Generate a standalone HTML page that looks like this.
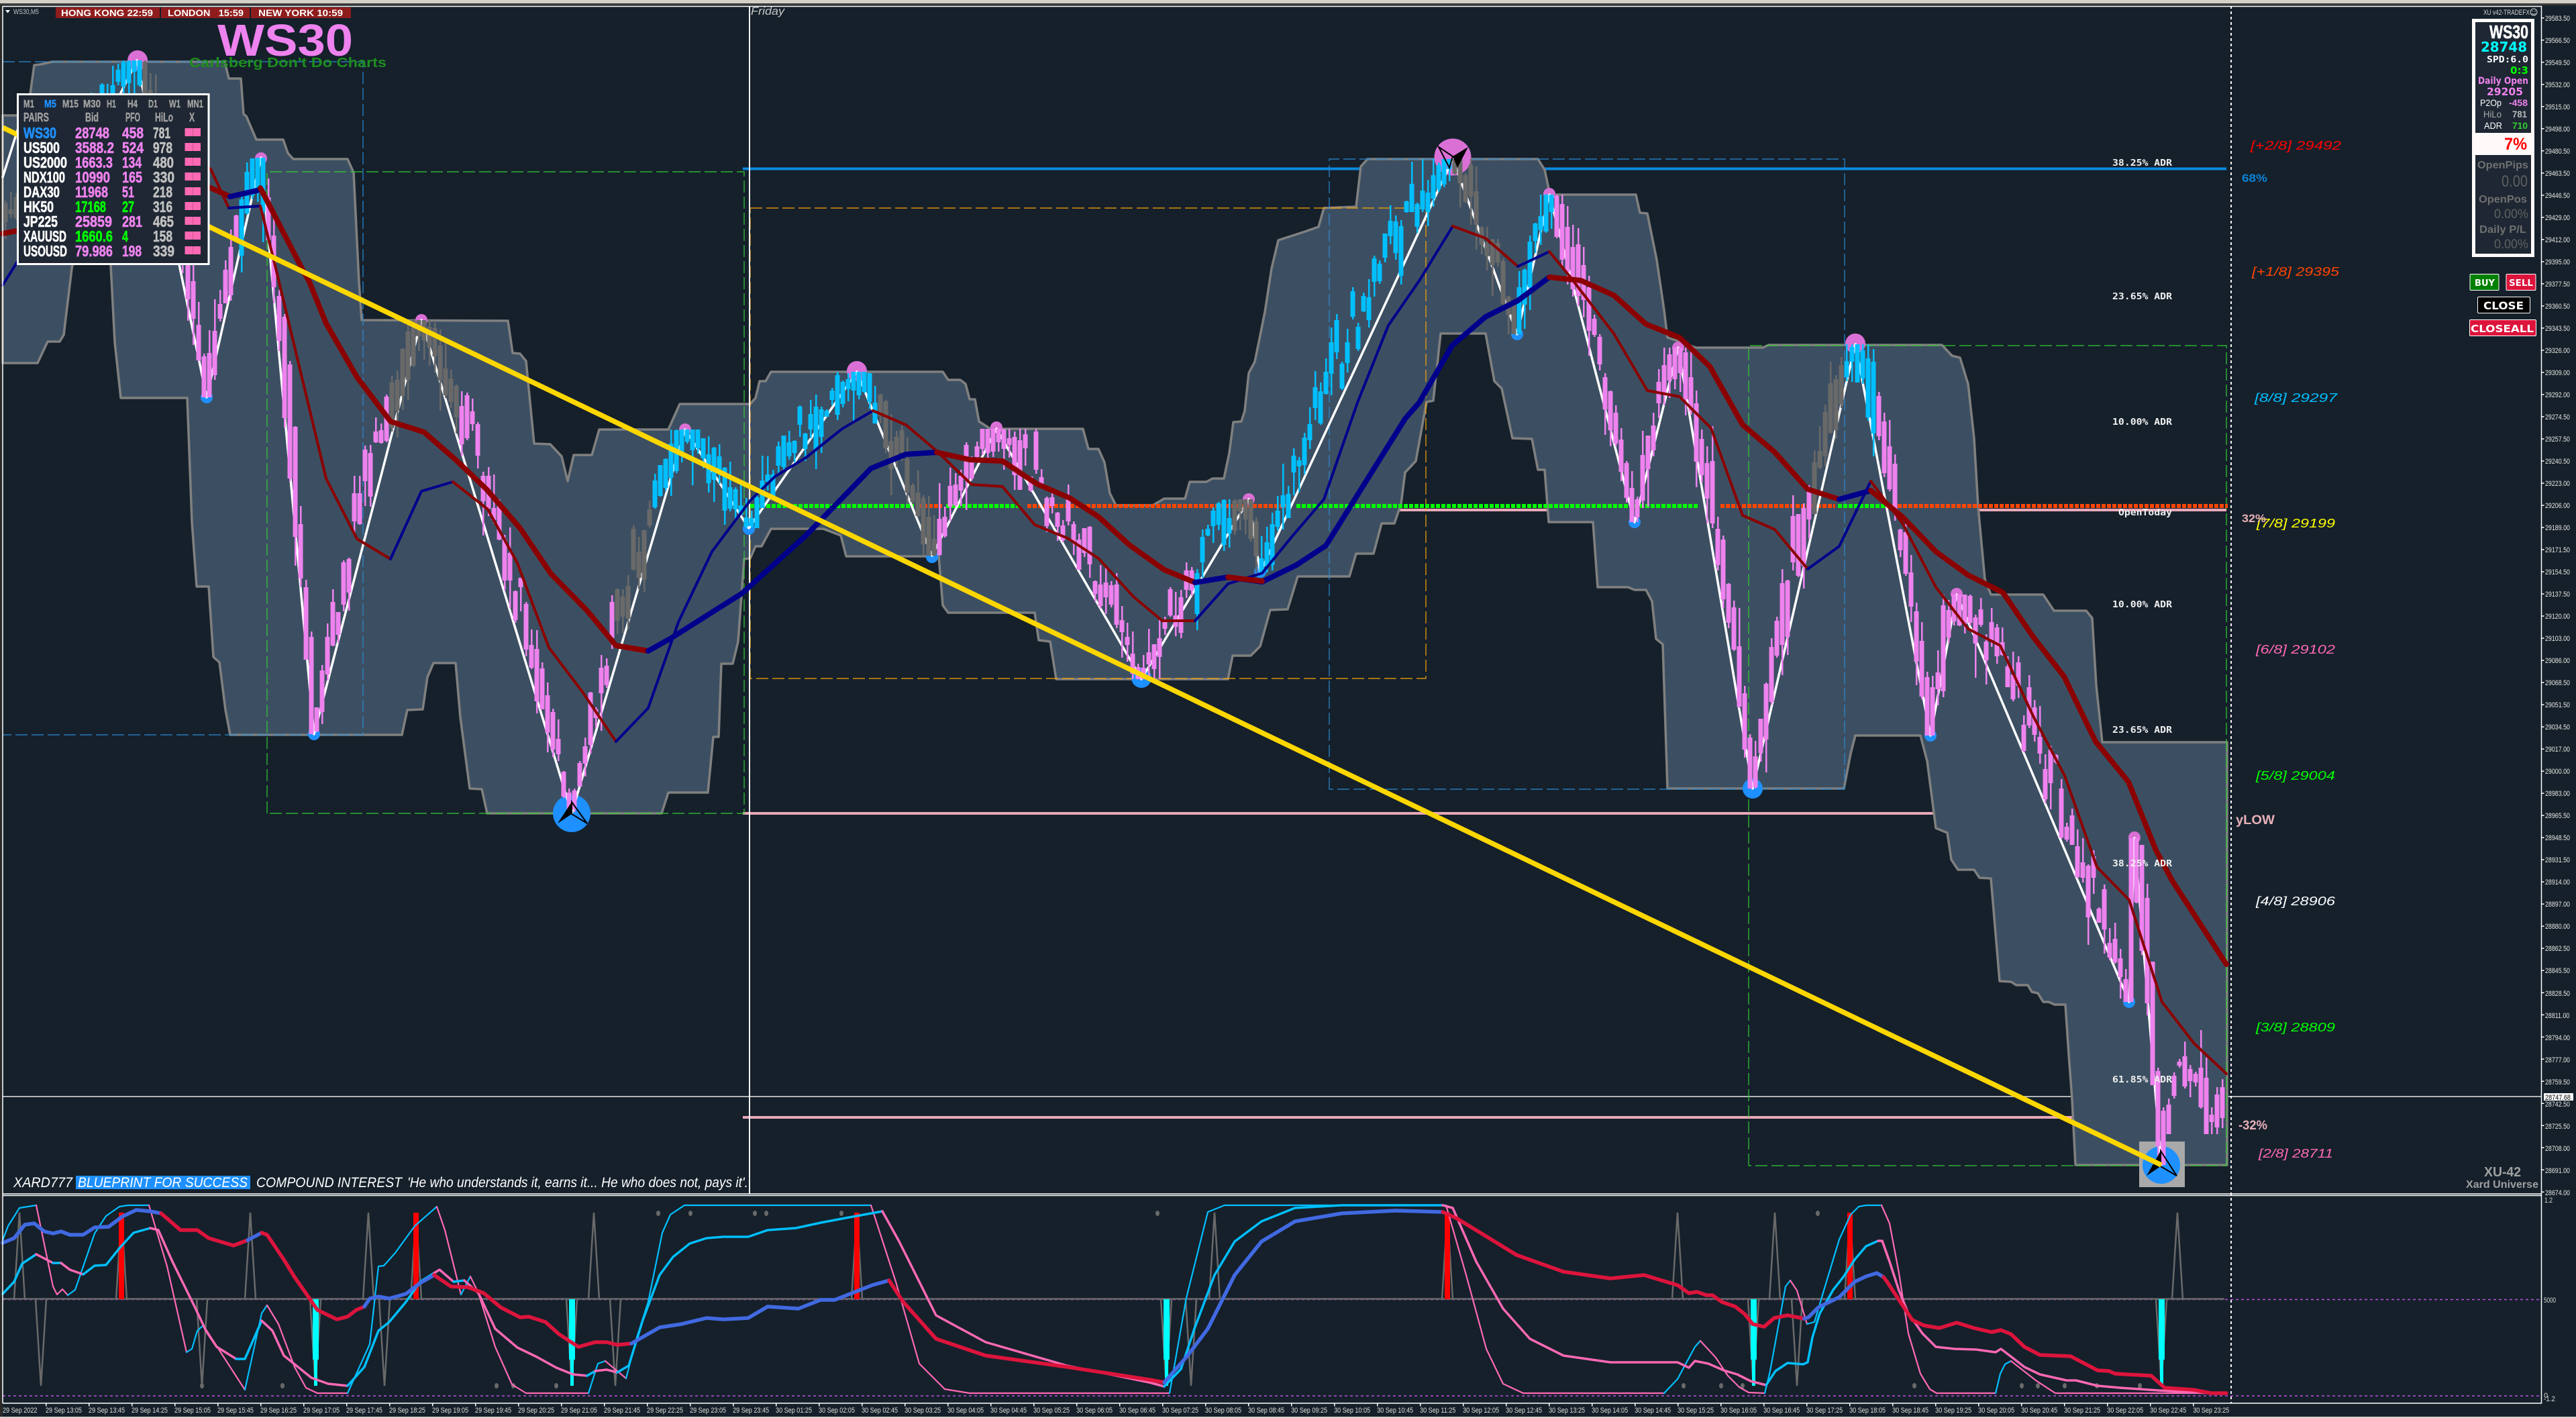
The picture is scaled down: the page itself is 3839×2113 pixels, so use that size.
<!DOCTYPE html>
<html><head><meta charset="utf-8"><title>WS30,M5</title>
<style>
html,body{margin:0;padding:0;background:#15202b;width:3839px;height:2113px;overflow:hidden}
svg{display:block;font-family:"Liberation Sans",sans-serif}
.c{stroke:#00bfff}.p{stroke:#ff69b4}.bl{stroke:#4169e1}.cr{stroke:#dc143c}.n{stroke:#00008b}.r{stroke:#8b0000}
polyline{fill:none;stroke-linejoin:round;stroke-linecap:round}
.lm{fill:#00ff00;stroke:#00ff00}
</style></head><body>
<svg xmlns="http://www.w3.org/2000/svg" width="3839" height="2113" viewBox="0 0 3839 2113">
<rect width="3839" height="2113" fill="#15202b"/>
<rect width="3839" height="5" fill="#d4d0c8"/><rect y="5" width="3839" height="3" fill="#3a3a3a"/>
<rect y="8" width="4" height="2105" fill="#2a2a2a"/>
<rect y="2111" width="3839" height="2" fill="#d4d0c8"/>

<!-- lines behind band -->
<g fill="none">
<path d="M1107 251.5H3318" stroke="#0a8ae0" stroke-width="4"/>
<path d="M1118 760H3318" stroke="#e8a7b8" stroke-width="4"/>
<path d="M1107 1212H2882M1107 1665H3095" stroke="#e8a7b8" stroke-width="4"/>
<path d="M4 1634H3787" stroke="#e6e6e6" stroke-width="1.5"/>
</g>

<!-- band -->
<polygon fill="#3c4f62" stroke="#808080" stroke-width="3.5" stroke-linejoin="round" points="4,172 25,172 35,165 45,140 51,97 60,96 78,92 335,92 341,117 359,117 363,170 367,173 382,208 422,208 429,228 437,237 518,237 527,257 535,420 539,477 757,478 764,526 775,527 784,538 796,661 820,662 837,680 846,717 855,678 882,678 893,640 996,640 1013,602 1118,602 1126,593 1132,568 1141,568 1149,554 1405,554 1413,566 1431,566 1439,572 1445,595 1453,595 1459,628 1476,639 1614,639 1622,669 1637,669 1646,689 1654,735 1663,753 1718,753 1735,743 1766,743 1773,718 1798,718 1807,713 1824,713 1832,675 1838,629 1850,628 1855,612 1861,556 1870,539 1878,500 1885,465 1895,400 1905,358 1945,345 1965,338 1973,310 2021,308 2028,248 2038,237 2292,237 2302,253 2310,290 2438,290 2444,317 2455,318 2469,387 2480,462 2485,503 2500,508 2527,518 2627,518 2636,514 2894,514 2909,530 2921,533 2933,572 2942,653 2948,755 2958,863 2967,886 3045,886 3061,910 3109,910 3118,921 3124,1021 3133,1106 3319,1106 3319,1736 3093,1736 3088,1638 3083,1571 3078,1497 3062,1497 3053,1493 3045,1493 3037,1480 3028,1478 3022,1468 3005,1468 2997,1463 2980,1462 2967,1309 2950,1308 2942,1296 2918,1296 2908,1281 2902,1241 2885,1234 2872,1134 2862,1096 2765,1096 2758,1123 2748,1175 2485,1175 2478,960 2468,952 2462,896 2453,879 2436,879 2426,875 2381,875 2374,778 2308,778 2302,700 2292,700 2283,654 2254,653 2238,579 2227,568 2214,497 2147,497 2136,597 2126,599 2110,687 2094,704 2088,751 2078,780 2059,780 2047,825 2021,825 2011,859 1934,859 1919,908 1893,909 1878,963 1864,977 1837,977 1830,1012 1574,1012 1565,956 1548,954 1542,913 1413,913 1405,902 1399,829 1261,829 1253,798 1227,788 1149,788 1135,814 1126,814 1118,832 1109,833 1100,956 1092,989 1075,989 1071,1098 1063,1098 1055,1181 996,1181 986,1212 726,1212 718,1176 700,1175 686,1069 679,988 646,988 637,1009 630,1057 607,1058 599,1095 343,1095 336,1058 327,987 318,979 311,874 293,874 286,778 279,593 180,593 171,510 165,395 160,300 112,300 108,395 107,400 95,499 89,509 71,509 56,541 4,541"/>

<!-- dashed rectangles -->
<g fill="none" stroke-width="1.2" stroke-dasharray="18 6">
<path d="M4 92H541V1095H4" stroke="#2a8ad4"/>
<path d="M398 1212V256H1109V1212H398" stroke="#32cd32"/>
<path d="M1118 310H2125V1011H1118Z" stroke="#ffa500"/>
<path d="M1981 1176V237H2749V1176H1981Z" stroke="#2a8ad4"/>
<path d="M2606 1737V515H3318V1737H2606" stroke="#32cd32"/>
</g>

<!-- open today dotted -->
<g fill="none" stroke-width="6" stroke-dasharray="6 2">
<path d="M1118 754H1362M1410 754H1522M1932 754H2530M2739 754H2809" stroke="#00ff00"/>
<path d="M1368 754H1404M1531 754H1922M2564 754H2735M2812 754H3320" stroke="#ff4500"/>
</g>

<!-- vertical markers -->
<path d="M1117 9V1779" stroke="#fff" stroke-width="2"/>
<path d="M3325 9V2091" stroke="#fff" stroke-width="2" stroke-dasharray="4 4"/>

<!-- pivot circles -->
<g fill="#da70d6">
<circle cx="205" cy="90" r="15"/><circle cx="389" cy="236" r="9"/><circle cx="628" cy="477" r="9"/><circle cx="1021" cy="640" r="9"/><circle cx="1277" cy="553" r="15"/><circle cx="1485" cy="637" r="9"/><circle cx="1861" cy="744" r="9"/><circle cx="2165" cy="234" r="27.5"/><circle cx="2309" cy="289" r="9"/><circle cx="2501" cy="518" r="9"/><circle cx="2765" cy="512" r="15"/><circle cx="2916" cy="885" r="9"/><circle cx="3181" cy="1248" r="9"/>
</g>
<rect x="3188" y="1701" width="68" height="68" fill="#a9a9a9"/>
<g fill="#1e90ff">
<circle cx="308" cy="592" r="9"/><circle cx="468" cy="1094" r="9"/><circle cx="1116" cy="788" r="9"/><circle cx="1389" cy="830" r="9"/><circle cx="1701" cy="1010" r="15"/><circle cx="1878" cy="852" r="9"/><circle cx="2261" cy="498" r="9"/><circle cx="2436" cy="778" r="9"/><circle cx="2612" cy="1175" r="15"/><circle cx="2877" cy="1096" r="9"/><circle cx="3173" cy="1493" r="9"/><circle cx="852" cy="1212" r="28"/><circle cx="3221" cy="1736" r="28"/>
</g>

<!-- zigzag -->
<polyline stroke="#fff" stroke-width="3.5" stroke-linecap="butt" points="4,264 40,150 100,300 204,90 308,592 389,235 468,1094 628,477 852,1212 1021,640 1116,787 1277,554 1389,828 1485,639 1701,1012 1861,744 1878,853 2165,237 2261,498 2309,290 2436,778 2501,518 2612,1175 2765,513 2877,1096 2916,886 3173,1493 3181,1249 3221,1736"/>

<!-- candles -->
<g fill="none" shape-rendering="crispEdges">
<path id="wb" stroke="#00bfff" stroke-width="2.5"/><path id="wv" stroke="#ee82ee" stroke-width="2.5"/><path id="wg" stroke="#696969" stroke-width="2.5"/>
<path id="bb" stroke="#00bfff" stroke-width="7"/><path id="bv" stroke="#ee82ee" stroke-width="7"/><path id="bg" stroke="#696969" stroke-width="7"/>
</g>

<!-- stars -->
<path d="M852 1195L831 1227L852 1213Z" fill="#000"/><path d="M852 1195L875 1227L852 1213Z" fill="none" stroke="#000" stroke-width="2"/>
<path d="M3220 1715L3199 1752L3220 1738Z" fill="#000"/><path d="M3220 1715L3244 1752L3220 1738Z" fill="none" stroke="#000" stroke-width="2"/>
<path d="M2188 219L2165 233L2172 250Z" fill="#000"/><path d="M2144 219L2165 233L2160 250Z" fill="none" stroke="#000" stroke-width="2"/>

<!-- moving averages thin -->
<g stroke-width="4">
<polyline class="n" points="4,425 24,393 60,340"/>
<polyline class="r" points="250,200 314,252 341,310"/>
<polyline class="n" points="341,310 388,307"/>
<polyline class="r" points="388,307 411,400 486,713 532,803 582,833"/>
<polyline class="n" points="582,833 628,732 675,718"/>
<polyline class="r" points="675,718 727,759 771,839 818,965 868,1031 918,1105"/>
<polyline class="n" points="918,1105 966,1055 1011,927 1061,822 1118,746 1155,710 1201,682 1255,639 1301,612"/>
<polyline class="r" points="1301,612 1350,633 1396,672 1448,722 1494,725 1542,782 1591,802 1637,832 1689,889 1732,925 1781,925"/>
<polyline class="n" points="1781,925 1830,870 1881,854 1925,800 1973,744 2023,600 2069,485 2116,417 2165,337"/>
<polyline class="r" points="2165,337 2214,355 2262,397"/>
<polyline class="n" points="2262,397 2309,375"/>
<polyline class="r" points="2309,375 2338,410 2405,497 2455,582 2503,591 2550,638 2597,768 2645,789 2694,848"/>
<polyline class="n" points="2694,848 2741,814 2788,717"/>
<polyline class="r" points="2788,717 2836,781 2885,875 2933,937 2981,962 3030,1067 3077,1156 3125,1292 3173,1341 3222,1493 3270,1555 3318,1600"/>
</g>
<!-- moving averages thick -->
<g stroke-width="8">
<polyline class="r" points="4,348 100,330 200,240 314,280 343,293"/>
<polyline class="n" points="343,293 387,283"/>
<polyline class="r" points="388,280 450,400 461,420 486,482 532,562 582,628 632,644 679,685 725,729 775,787 821,855 875,910 918,962 966,970"/>
<polyline class="n" points="966,970 1000,951 1106,884 1201,798 1298,698 1350,677 1396,674"/>
<polyline class="r" points="1396,674 1445,685 1494,687 1545,721 1594,742 1637,770 1683,812 1735,849 1781,868"/>
<polyline class="n" points="1781,868 1830,860 1881,867 1932,842 1976,813 2094,624 2115,600 2164,515 2214,472 2262,448 2309,413"/>
<polyline class="r" points="1830,860 1881,866"/>
<polyline class="r" points="2309,413 2356,418 2405,440 2453,483 2503,503 2548,546 2597,633 2645,674 2694,729 2741,744"/>
<polyline class="n" points="2741,744 2788,731"/>
<polyline class="r" points="2788,731 2836,771 2885,822 2933,857 2985,883 3030,949 3076,1008 3123,1105 3172,1165 3213,1267 3237,1312 3318,1437"/>
</g>
<!-- yellow trend -->
<path d="M4 190L3221 1736" stroke="#ffd700" stroke-width="7.5"/>

<!-- on-chart labels -->
<g font-family="'DejaVu Sans Mono','Liberation Mono',monospace" font-weight="bold" font-size="13" fill="#f0f0f0">
<text x="3148" y="247" textLength="89" lengthAdjust="spacingAndGlyphs">38.25% ADR</text>
<text x="3148" y="446" textLength="89" lengthAdjust="spacingAndGlyphs">23.65% ADR</text>
<text x="3148" y="633" textLength="89" lengthAdjust="spacingAndGlyphs">10.00% ADR</text>
<text x="3157" y="768" textLength="80" lengthAdjust="spacingAndGlyphs">OpenToday</text>
<text x="3148" y="905" textLength="89" lengthAdjust="spacingAndGlyphs">10.00% ADR</text>
<text x="3148" y="1092" textLength="89" lengthAdjust="spacingAndGlyphs">23.65% ADR</text>
<text x="3148" y="1291" textLength="89" lengthAdjust="spacingAndGlyphs">38.25% ADR</text>
<text x="3148" y="1613" textLength="89" lengthAdjust="spacingAndGlyphs">61.85% ADR</text>
</g>
<g font-style="italic" font-size="18">
<text x="3354" y="223" fill="#ff0000" textLength="135" lengthAdjust="spacingAndGlyphs">[+2/8] 29492</text>
<text x="3356" y="411" fill="#ff4500" textLength="130" lengthAdjust="spacingAndGlyphs">[+1/8] 29395</text>
<text x="3360" y="599" fill="#00bfff" textLength="123" lengthAdjust="spacingAndGlyphs">[8/8] 29297</text>
<text x="3363" y="786" fill="#ffff00" textLength="117" lengthAdjust="spacingAndGlyphs">[7/8] 29199</text>
<text x="3362" y="974" fill="#ff69b4" textLength="118" lengthAdjust="spacingAndGlyphs">[6/8] 29102</text>
<text x="3362" y="1162" fill="#00ff00" textLength="118" lengthAdjust="spacingAndGlyphs">[5/8] 29004</text>
<text x="3362" y="1349" fill="#ffffff" textLength="118" lengthAdjust="spacingAndGlyphs">[4/8] 28906</text>
<text x="3362" y="1537" fill="#00ff00" textLength="118" lengthAdjust="spacingAndGlyphs">[3/8] 28809</text>
<text x="3366" y="1725" fill="#ff69b4" textLength="111" lengthAdjust="spacingAndGlyphs">[2/8] 28711</text>
</g>
<g font-weight="bold">
<text x="3341" y="271" font-size="17" fill="#0a84d8" textLength="38" lengthAdjust="spacingAndGlyphs">68%</text>
<text x="3341" y="778" font-size="17" fill="#e8b0b8" textLength="36" lengthAdjust="spacingAndGlyphs">32%</text>
<text x="3332" y="1228" font-size="19" fill="#e8b0b8" textLength="58" lengthAdjust="spacingAndGlyphs">yLOW</text>
<text x="3336" y="1683" font-size="19" fill="#e8b0b8" textLength="43" lengthAdjust="spacingAndGlyphs">-32%</text>
<text x="3702" y="1753" font-size="20" fill="#a0a0a0" textLength="55" lengthAdjust="spacingAndGlyphs">XU-42</text>
<text x="3675" y="1770" font-size="16" fill="#a0a0a0" textLength="108" lengthAdjust="spacingAndGlyphs">Xard Universe</text>
</g>
<text x="1119" y="22" font-size="17" font-style="italic" fill="#c8c8c8" textLength="50" lengthAdjust="spacingAndGlyphs">Friday</text>
<rect x="113" y="1752" width="260" height="20" fill="#1e90ff"/>
<g font-size="21" font-style="italic" fill="#fff">
<text x="20" y="1769" textLength="88" lengthAdjust="spacingAndGlyphs">XARD777</text>
<text x="116" y="1769" textLength="253" lengthAdjust="spacingAndGlyphs">BLUEPRINT FOR SUCCESS</text>
<text x="382" y="1769" textLength="217" lengthAdjust="spacingAndGlyphs">COMPOUND INTEREST</text>
<text x="607" y="1769" textLength="508" lengthAdjust="spacingAndGlyphs">'He who understands it, earns it... He who does not, pays it'.</text>
</g>

<!-- header -->
<path d="M8 15h7l-3.5 4.5z" fill="#fff"/>
<text x="20" y="21" font-size="11" fill="#c0c0c0" textLength="38" lengthAdjust="spacingAndGlyphs">WS30,M5</text>
<g fill="#8f1d1d"><rect x="83" y="11" width="155" height="16"/><rect x="240" y="11" width="132" height="16"/><rect x="374" y="11" width="149" height="16"/></g>
<g font-size="14" font-weight="bold" fill="#fff">
<text x="91" y="24" textLength="137" lengthAdjust="spacingAndGlyphs">HONG KONG  22:59</text>
<text x="250" y="24" xml:space="preserve" textLength="113" lengthAdjust="spacingAndGlyphs">LONDON   15:59</text>
<text x="385" y="24" textLength="126" lengthAdjust="spacingAndGlyphs">NEW YORK  10:59</text>
</g>
<text x="324" y="83" font-size="67" font-weight="bold" fill="#ee82ee" textLength="202" lengthAdjust="spacingAndGlyphs">WS30</text>
<text x="282" y="100" font-size="20" font-weight="bold" fill="#1e8e1e" textLength="294" lengthAdjust="spacingAndGlyphs">Carlsberg Don't Do Charts</text>

<!-- pairs panel -->
<rect x="26.5" y="140.5" width="284.5" height="253" fill="#1e2733" stroke="#fff" stroke-width="3"/>
<g font-weight="bold" font-size="16" fill="#a0a0a0" stroke="#a0a0a0" stroke-width=".4">
<text x="35" y="160" textLength="16" lengthAdjust="spacingAndGlyphs">M1</text>
<text x="66" y="160" fill="#1e90ff" stroke="#1e90ff" textLength="18" lengthAdjust="spacingAndGlyphs">M5</text>
<text x="93" y="160" textLength="24" lengthAdjust="spacingAndGlyphs">M15</text>
<text x="124" y="160" textLength="26" lengthAdjust="spacingAndGlyphs">M30</text>
<text x="159" y="160" textLength="14" lengthAdjust="spacingAndGlyphs">H1</text>
<text x="190" y="160" textLength="15" lengthAdjust="spacingAndGlyphs">H4</text>
<text x="221" y="160" textLength="14" lengthAdjust="spacingAndGlyphs">D1</text>
<text x="252" y="160" textLength="17" lengthAdjust="spacingAndGlyphs">W1</text>
<text x="279" y="160" textLength="24" lengthAdjust="spacingAndGlyphs">MN1</text>
<g font-size="18">
<text x="35" y="181" textLength="38" lengthAdjust="spacingAndGlyphs">PAIRS</text>
<text x="127" y="181" textLength="20" lengthAdjust="spacingAndGlyphs">Bid</text>
<text x="187" y="181" textLength="22" lengthAdjust="spacingAndGlyphs">PFO</text>
<text x="231" y="181" textLength="27" lengthAdjust="spacingAndGlyphs">HiLo</text>
<text x="282" y="181" textLength="8" lengthAdjust="spacingAndGlyphs">X</text>
</g>
</g>
<g font-weight="bold" font-size="23" fill="#fff" stroke="#fff" stroke-width=".6">
<text x="35" y="206" fill="#1e90ff" stroke="#1e90ff" textLength="49" lengthAdjust="spacingAndGlyphs">WS30</text>
<text x="35" y="228" textLength="54" lengthAdjust="spacingAndGlyphs">US500</text>
<text x="35" y="250" textLength="65" lengthAdjust="spacingAndGlyphs">US2000</text>
<text x="35" y="272" textLength="62" lengthAdjust="spacingAndGlyphs">NDX100</text>
<text x="35" y="294" textLength="54" lengthAdjust="spacingAndGlyphs">DAX30</text>
<text x="35" y="316" textLength="45" lengthAdjust="spacingAndGlyphs">HK50</text>
<text x="35" y="338" textLength="51" lengthAdjust="spacingAndGlyphs">JP225</text>
<text x="35" y="360" textLength="64" lengthAdjust="spacingAndGlyphs">XAUUSD</text>
<text x="35" y="382" textLength="65" lengthAdjust="spacingAndGlyphs">USOUSD</text>
<g fill="#ee82ee" stroke="#ee82ee">
<text x="112" y="206" textLength="51" lengthAdjust="spacingAndGlyphs">28748</text>
<text x="112" y="228" textLength="58" lengthAdjust="spacingAndGlyphs">3588.2</text>
<text x="112" y="250" textLength="56" lengthAdjust="spacingAndGlyphs">1663.3</text>
<text x="112" y="272" textLength="52" lengthAdjust="spacingAndGlyphs">10990</text>
<text x="112" y="294" textLength="49" lengthAdjust="spacingAndGlyphs">11968</text>
<text x="112" y="316" class="lm" textLength="46" lengthAdjust="spacingAndGlyphs">17168</text>
<text x="112" y="338" textLength="55" lengthAdjust="spacingAndGlyphs">25859</text>
<text x="112" y="360" class="lm" textLength="56" lengthAdjust="spacingAndGlyphs">1660.6</text>
<text x="112" y="382" textLength="56" lengthAdjust="spacingAndGlyphs">79.986</text>
<text x="182" y="206" textLength="32" lengthAdjust="spacingAndGlyphs">458</text>
<text x="182" y="228" textLength="32" lengthAdjust="spacingAndGlyphs">524</text>
<text x="182" y="250" textLength="29" lengthAdjust="spacingAndGlyphs">134</text>
<text x="182" y="272" textLength="30" lengthAdjust="spacingAndGlyphs">165</text>
<text x="182" y="294" textLength="18" lengthAdjust="spacingAndGlyphs">51</text>
<text x="182" y="316" class="lm" textLength="18" lengthAdjust="spacingAndGlyphs">27</text>
<text x="182" y="338" textLength="30" lengthAdjust="spacingAndGlyphs">281</text>
<text x="182" y="360" class="lm" textLength="9" lengthAdjust="spacingAndGlyphs">4</text>
<text x="182" y="382" textLength="29" lengthAdjust="spacingAndGlyphs">198</text>
</g>
<g fill="#c0c0c0" stroke="#c0c0c0">
<text x="228" y="206" textLength="26" lengthAdjust="spacingAndGlyphs">781</text>
<text x="228" y="228" textLength="29" lengthAdjust="spacingAndGlyphs">978</text>
<text x="228" y="250" textLength="31" lengthAdjust="spacingAndGlyphs">480</text>
<text x="228" y="272" textLength="32" lengthAdjust="spacingAndGlyphs">330</text>
<text x="228" y="294" textLength="29" lengthAdjust="spacingAndGlyphs">218</text>
<text x="228" y="316" textLength="29" lengthAdjust="spacingAndGlyphs">316</text>
<text x="228" y="338" textLength="31" lengthAdjust="spacingAndGlyphs">465</text>
<text x="228" y="360" textLength="29" lengthAdjust="spacingAndGlyphs">158</text>
<text x="228" y="382" textLength="32" lengthAdjust="spacingAndGlyphs">339</text>
</g>
</g>
<path d="M275.5 197H299M275.5 219H299M275.5 241H299M275.5 263H299M275.5 285H299M275.5 307H299M275.5 329H299M275.5 351H299M275.5 373H299" stroke="#ff69b4" stroke-width="12"/>
<path d="M287.5 191V379" stroke="#c85a90" stroke-width="1" stroke-dasharray="12 10"/>

<!-- sub window -->
<g fill="none">
<path d="M4 1936.5H3787M4 2080H3787" stroke="#c050e0" stroke-width="1.5" stroke-dasharray="4 4"/>
<path d="M4 1935.5H3315" stroke="#696969" stroke-width="2.5"/>
<path stroke="#696969" stroke-width="2.5" d="M21 1936L29 1807L37 1936M365 1936L373 1807L381 1936M541 1936L549 1807L557 1936M877 1936L885 1807L893 1936M1802 1936L1810 1807L1818 1936M2492 1936L2500 1807L2508 1936M2637 1936L2645 1807L2653 1936M3237 1936L3245 1807L3253 1936M173 1936L181 1807L189 1936M612 1936L620 1807L628 1936M1269 1936L1277 1807L1285 1936M2149 1936L2157 1807L2165 1936M2749 1936L2757 1807L2765 1936"/>
<path stroke="#696969" stroke-width="2.5" d="M53 1936L61 2065L69 1936M293 1936L301 2065L309 1936M565 1936L573 2065L581 1936M909 1936L917 2065L925 1936M1767 1936L1775 2065L1783 1936M2670 1936L2678 2065L2686 1936M462 1936L470 2065L478 1936M844 1936L852 2065L860 1936M1730 1936L1738 2065L1746 1936M2605 1936L2613 2065L2621 1936M3213 1936L3221 2065L3229 1936"/>
</g>
<g fill="#ff0000"><rect x="177" y="1807" width="8" height="129"/><rect x="616" y="1807" width="8" height="129"/><rect x="1273" y="1807" width="8" height="129"/><rect x="2153" y="1807" width="8" height="129"/><rect x="2753" y="1807" width="8" height="129"/></g>
<g fill="#00ffff">
<path d="M466 1936h9v90h-2v39h-5v-39h-2zM848 1936h9v90h-2v39h-5v-39h-2zM1734 1936h9v90h-2v39h-5v-39h-2zM2609 1936h9v90h-2v39h-5v-39h-2zM3217 1936h9v90h-2v39h-5v-39h-2z"/>
</g>
<g fill="#696969">
<ellipse cx="981" cy="1808" rx="3" ry="4"/><ellipse cx="1029" cy="1808" rx="3" ry="4"/><ellipse cx="1125" cy="1808" rx="3" ry="4"/><ellipse cx="1142" cy="1808" rx="3" ry="4"/><ellipse cx="1254" cy="1808" rx="3" ry="4"/><ellipse cx="2709" cy="1808" rx="3" ry="4"/><ellipse cx="1725" cy="1808" rx="3" ry="4"/>
<ellipse cx="301" cy="2065" rx="3" ry="4"/><ellipse cx="421" cy="2065" rx="3" ry="4"/><ellipse cx="740" cy="2065" rx="3" ry="4"/><ellipse cx="765" cy="2065" rx="3" ry="4"/><ellipse cx="829" cy="2065" rx="3" ry="4"/><ellipse cx="2509" cy="2065" rx="3" ry="4"/><ellipse cx="2565" cy="2065" rx="3" ry="4"/><ellipse cx="2597" cy="2065" rx="3" ry="4"/><ellipse cx="2853" cy="2065" rx="3" ry="4"/><ellipse cx="3013" cy="2065" rx="3" ry="4"/><ellipse cx="3037" cy="2065" rx="3" ry="4"/><ellipse cx="3077" cy="2065" rx="3" ry="4"/><ellipse cx="3125" cy="2065" rx="3" ry="4"/><ellipse cx="3189" cy="2065" rx="3" ry="4"/>
</g>
<!-- fast line -->
<g stroke-width="2.2">
<polyline class="c" points="4,1848 12,1827 29,1800 54,1796"/>
<polyline class="p" points="54,1796 79,1917 85,1929 93,1921 101,1930"/>
<polyline class="c" points="101,1930 112,1922 141,1838 158,1812 178,1798 191,1796 222,1796"/>
<polyline class="p" points="222,1796 232,1830 249,1887 278,2015"/>
<polyline class="c" points="278,2015 286,2010 294,1983 303,1975"/>
<polyline class="p" points="303,1975 365,2071"/>
<polyline class="c" points="365,2071 390,1957 398,1945"/>
<polyline class="p" points="398,1945 415,1973 439,2037 456,2068 473,2076 518,2076"/>
<polyline class="c" points="518,2076 551,2003 564,1887 572,1886 589,1867 618,1827 651,1798"/>
<polyline class="p" points="651,1798 663,1833 687,1929"/>
<polyline class="c" points="687,1929 701,1902"/>
<polyline class="p" points="701,1902 713,1927 738,2007 763,2063 784,2076 877,2076"/>
<polyline class="c" points="877,2076 891,2032 902,2028"/>
<polyline class="p" points="902,2028 933,2054"/>
<polyline class="c" points="933,2054 949,1993 966,1940 987,1837 999,1810 1020,1796 1298,1796"/>
<polyline class="p" points="1298,1796 1335,1910 1370,2032 1408,2070 1445,2076 1743,2076"/>
<polyline class="c" points="1743,2076 1768,1934 1800,1806 1825,1796 2155,1796"/>
<polyline class="p" points="2155,1796 2185,1900 2215,2010 2240,2062 2270,2076 2480,2076"/>
<polyline class="c" points="2480,2076 2500,2055 2526,2007 2534,1998"/>
<polyline class="p" points="2534,1998 2557,2023 2575,2050 2592,2067 2606,2075 2630,2076"/>
<polyline class="c" points="2630,2076 2638,2043 2661,1917 2668,1908"/>
<polyline class="p" points="2668,1908 2678,1923 2693,1973"/>
<polyline class="c" points="2693,1973 2704,1970 2718,1923 2741,1847 2758,1810 2770,1798 2781,1796 2804,1796"/>
<polyline class="p" points="2804,1796 2816,1823 2830,1897 2844,1987 2862,2047 2876,2070 2886,2076 2974,2076"/>
<polyline class="c" points="2974,2076 2981,2047 2988,2033 2997,2028"/>
<polyline class="p" points="2997,2028 3034,2057 3063,2076 3300,2076"/>
</g>
<!-- medium line -->
<g stroke-width="3.5">
<polyline class="c" points="4,1928 21,1910 33,1883 54,1869"/>
<polyline class="p" points="54,1869 79,1882"/>
<polyline class="c" points="79,1882 91,1882"/>
<polyline class="p" points="91,1882 104,1892 124,1899"/>
<polyline class="c" points="124,1899 141,1886 158,1885 178,1860 199,1837 224,1830"/>
<polyline class="p" points="224,1830 236,1833 257,1880 290,1947 307,1983 323,2007 352,2025"/>
<polyline class="c" points="352,2025 365,2025 390,1968"/>
<polyline class="p" points="390,1968 406,1983 423,2020 464,2053 489,2062 518,2065"/>
<polyline class="c" points="518,2065 543,2037 564,1983 580,1970 605,1940 626,1910 647,1897"/>
<polyline class="p" points="647,1897 655,1892 676,1910"/>
<polyline class="c" points="676,1910 692,1908"/>
<polyline class="p" points="692,1908 713,1927 738,1980 771,2008 800,2022 829,2038 854,2048 875,2050"/>
<polyline class="c" points="875,2050 887,2043"/>
<polyline class="p" points="887,2043 904,2041 920,2045"/>
<polyline class="c" points="920,2045 937,2035 958,1967 983,1900 1003,1873 1028,1853 1053,1845 1078,1843 1115,1843 1144,1833 1186,1830 1223,1822 1260,1815 1315,1805"/>
<polyline class="p" points="1315,1805 1340,1850 1395,1960 1469,2000 1590,2035 1713,2060 1735,2066"/>
<polyline class="c" points="1735,2066 1760,2040 1780,1980 1810,1900 1840,1850 1880,1820 1930,1800 2000,1796 2150,1796"/>
<polyline class="p" points="2150,1796 2165,1800 2200,1880 2240,1950 2280,1995 2330,2020 2400,2030 2500,2030 2517,2038 2526,2028 2546,2032 2569,2042 2589,2048 2609,2058 2632,2064"/>
<polyline class="c" points="2632,2064 2646,2043 2664,2031 2687,2033 2694,2030 2701,1993 2712,1957 2732,1922 2747,1903 2764,1877 2781,1857 2799,1849"/>
<polyline class="p" points="2799,1849 2805,1849 2816,1880 2830,1923 2844,1957 2865,1987 2885,2007 2913,2010 2945,2011 2974,2015 2982,2010 2999,2023 3017,2037 3040,2048 3080,2057 3094,2057 3126,2065 3160,2068 3218,2072 3275,2075 3304,2077"/>
</g>
<!-- slow line -->
<g stroke-width="5.5">
<polyline class="bl" points="4,1852 21,1845 37,1825 51,1823 66,1835 79,1838 91,1835 104,1840 124,1840 141,1829 162,1828 182,1813 203,1803 224,1805 240,1808"/>
<polyline class="cr" points="240,1808 269,1833 294,1833 311,1845 348,1856 369,1848"/>
<polyline class="bl" points="369,1848 390,1837"/>
<polyline class="cr" points="390,1837 398,1840 423,1877 439,1903 460,1933 473,1952 502,1966 518,1962 531,1952 543,1947"/>
<polyline class="bl" points="543,1947 551,1935 564,1932 580,1935 605,1928 626,1912 647,1900"/>
<polyline class="cr" points="647,1900 672,1917 697,1918 721,1927 746,1948 775,1963 788,1962 813,1970 833,1988 862,2007 887,2000 904,2000 920,2004 941,2002"/>
<polyline class="bl" points="941,2002 962,1990 983,1978 1016,1973 1053,1964 1078,1966 1115,1964 1144,1947 1190,1950 1223,1937 1244,1937 1300,1915 1325,1908"/>
<polyline class="cr" points="1325,1908 1346,1940 1395,1995 1469,2020 1591,2037 1713,2056 1735,2060"/>
<polyline class="bl" points="1735,2060 1770,2020 1800,1980 1840,1900 1880,1850 1930,1820 2000,1808 2080,1804 2150,1806"/>
<polyline class="cr" points="2150,1806 2170,1815 2203,1835 2260,1870 2330,1895 2400,1905 2450,1900 2500,1915 2517,1927 2529,1925 2543,1930 2552,1930 2566,1940 2586,1947 2600,1958 2612,1973 2629,1977 2644,1964 2664,1960 2689,1965"/>
<polyline class="bl" points="2689,1965 2695,1963 2710,1948 2741,1933 2764,1910 2781,1902 2797,1897 2807,1903"/>
<polyline class="cr" points="2807,1903 2813,1911 2830,1937 2850,1967 2867,1975 2890,1979 2916,1971 2942,1979 2968,1985 2982,1982 2997,1988 3017,2007 3040,2019 3086,2021 3126,2042 3143,2043 3152,2047 3206,2050 3226,2068 3269,2071 3295,2076 3318,2076"/>
</g>

<!-- frames -->
<g fill="none" stroke="#fff" stroke-width="1.5">
<path d="M4 9.5H3787.5V2091H4"/>
<path d="M4 1779H3787M4 1781.5H3787"/>
<path d="M4 9V2091"/>
</g>
<path d="M68 2093H3300" stroke="#fff" stroke-width="5" stroke-dasharray="1.5 62.5"/>
<path d="M3789.5 26V1780" stroke="#fff" stroke-width="4" stroke-dasharray="1.5 31.51"/>

<!-- price axis -->
<g transform="translate(3793,0) scale(.806,1)" font-size="11" fill="#e8e8e0">
<text y="31">29583.50</text><text y="64">29566.50</text><text y="97">29549.50</text><text y="130">29532.00</text><text y="163">29515.00</text><text y="196">29498.00</text><text y="229">29480.50</text><text y="262">29463.50</text><text y="295">29446.50</text><text y="328">29429.00</text><text y="361">29412.00</text><text y="394">29395.00</text><text y="427">29377.50</text><text y="460">29360.50</text><text y="493">29343.50</text><text y="526">29326.00</text><text y="559">29309.00</text><text y="592">29292.00</text><text y="625">29274.50</text><text y="658">29257.50</text><text y="691">29240.50</text><text y="724">29223.00</text><text y="757">29206.00</text><text y="790">29189.00</text><text y="823">29171.50</text><text y="856">29154.50</text><text y="889">29137.50</text><text y="922">29120.00</text><text y="955">29103.00</text><text y="988">29086.00</text><text y="1021">29068.50</text><text y="1054">29051.50</text><text y="1087">29034.50</text><text y="1120">29017.00</text><text y="1153">29000.00</text><text y="1186">28983.00</text><text y="1219">28965.50</text><text y="1252">28948.50</text><text y="1285">28931.50</text><text y="1318">28914.00</text><text y="1351">28897.00</text><text y="1384">28880.00</text><text y="1417">28862.50</text><text y="1450">28845.50</text><text y="1484">28828.50</text><text y="1517">28811.00</text><text y="1550">28794.00</text><text y="1583">28777.00</text><text y="1616">28759.50</text><text y="1649">28742.50</text><text y="1682">28725.50</text><text y="1715">28708.00</text><text y="1748">28691.00</text><text y="1781">28674.00</text>
</g>
<rect x="3791" y="1629" width="44" height="11" fill="#fff"/>
<text x="3793" y="1639" font-size="11" fill="#000" textLength="38" lengthAdjust="spacingAndGlyphs">28747.68</text>
<g font-size="11" fill="#d8d8d0">
<text x="3792" y="1792" textLength="12" lengthAdjust="spacingAndGlyphs">1.2</text>
<text x="3791" y="1941" textLength="18" lengthAdjust="spacingAndGlyphs">5000</text>
<text x="3791" y="2083">0</text>
<text x="3791" y="2088" textLength="17" lengthAdjust="spacingAndGlyphs">-1.2</text>
</g>

<!-- time axis -->
<g transform="translate(4,0) scale(.825,1)" font-size="11" fill="#e0e0d8">
<text x="0" y="2105">29 Sep 2022</text><text x="77.6" y="2105">29 Sep 13:05</text><text x="155.2" y="2105">29 Sep 13:45</text><text x="232.7" y="2105">29 Sep 14:25</text><text x="310.3" y="2105">29 Sep 15:05</text><text x="387.9" y="2105">29 Sep 15:45</text><text x="465.5" y="2105">29 Sep 16:25</text><text x="543.1" y="2105">29 Sep 17:05</text><text x="620.6" y="2105">29 Sep 17:45</text><text x="698.2" y="2105">29 Sep 18:25</text><text x="775.8" y="2105">29 Sep 19:05</text><text x="853.4" y="2105">29 Sep 19:45</text><text x="931" y="2105">29 Sep 20:25</text><text x="1008.5" y="2105">29 Sep 21:05</text><text x="1086.1" y="2105">29 Sep 21:45</text><text x="1163.7" y="2105">29 Sep 22:25</text><text x="1241.3" y="2105">29 Sep 23:05</text><text x="1318.9" y="2105">29 Sep 23:45</text><text x="1396.4" y="2105">30 Sep 01:25</text><text x="1474" y="2105">30 Sep 02:05</text><text x="1551.6" y="2105">30 Sep 02:45</text><text x="1629.2" y="2105">30 Sep 03:25</text><text x="1706.8" y="2105">30 Sep 04:05</text><text x="1784.3" y="2105">30 Sep 04:45</text><text x="1861.9" y="2105">30 Sep 05:25</text><text x="1939.5" y="2105">30 Sep 06:05</text><text x="2017.1" y="2105">30 Sep 06:45</text><text x="2094.7" y="2105">30 Sep 07:25</text><text x="2172.2" y="2105">30 Sep 08:05</text><text x="2249.8" y="2105">30 Sep 08:45</text><text x="2327.4" y="2105">30 Sep 09:25</text><text x="2405" y="2105">30 Sep 10:05</text><text x="2482.6" y="2105">30 Sep 10:45</text><text x="2560.1" y="2105">30 Sep 11:25</text><text x="2637.7" y="2105">30 Sep 12:05</text><text x="2715.3" y="2105">30 Sep 12:45</text><text x="2792.9" y="2105">30 Sep 13:25</text><text x="2870.5" y="2105">30 Sep 14:05</text><text x="2948" y="2105">30 Sep 14:45</text><text x="3025.6" y="2105">30 Sep 15:25</text><text x="3103.2" y="2105">30 Sep 16:05</text><text x="3180.8" y="2105">30 Sep 16:45</text><text x="3258.4" y="2105">30 Sep 17:25</text><text x="3335.9" y="2105">30 Sep 18:05</text><text x="3413.5" y="2105">30 Sep 18:45</text><text x="3491.1" y="2105">30 Sep 19:25</text><text x="3568.7" y="2105">30 Sep 20:05</text><text x="3646.3" y="2105">30 Sep 20:45</text><text x="3723.8" y="2105">30 Sep 21:25</text><text x="3801.4" y="2105">30 Sep 22:05</text><text x="3879" y="2105">30 Sep 22:45</text><text x="3956.6" y="2105">30 Sep 23:25</text>
</g>

<!-- top right -->
<text x="3701" y="22" font-size="11" fill="#d0d0d0" textLength="69" lengthAdjust="spacingAndGlyphs">XU v42-TRADEFX</text>
<circle cx="3776" cy="18" r="5" fill="none" stroke="#d8d8d8" stroke-width="1"/><circle cx="3774" cy="16.5" r=".8" fill="#d8d8d8"/><circle cx="3778" cy="16.5" r=".8" fill="#d8d8d8"/><path d="M3773 20q3 2.5 6 0" fill="none" stroke="#d8d8d8" stroke-width=".9"/>

<!-- info panel -->
<rect x="3684" y="28" width="93" height="355" fill="#fffafa"/>
<rect x="3689" y="33" width="83" height="165" fill="#1e2733"/>
<rect x="3689" y="231" width="83" height="147" fill="#1e2733"/>
<g font-weight="bold">
<text x="3710" y="57" font-size="28" fill="#fff" stroke="#fff" stroke-width=".6" textLength="58" lengthAdjust="spacingAndGlyphs">WS30</text>
<text x="3697" y="77" font-size="20" fill="#00ffff" font-family="'DejaVu Sans',sans-serif" textLength="69" lengthAdjust="spacingAndGlyphs">28748</text>
<text x="3706" y="93" font-size="13" fill="#fff" font-family="'DejaVu Sans Mono',monospace" textLength="62" lengthAdjust="spacingAndGlyphs">SPD:6.0</text>
<text x="3741" y="110" font-size="15" fill="#00ff00" font-family="'DejaVu Sans',sans-serif" textLength="27" lengthAdjust="spacingAndGlyphs">0:3</text>
<text x="3693" y="125" font-size="14" fill="#ee82ee" font-family="'DejaVu Sans',sans-serif" textLength="75" lengthAdjust="spacingAndGlyphs">Daily Open</text>
<text x="3706" y="142" font-size="16" fill="#ee82ee" font-family="'DejaVu Sans',sans-serif" textLength="54" lengthAdjust="spacingAndGlyphs">29205</text>
<text x="3739" y="158" font-size="14" fill="#ee82ee" textLength="28" lengthAdjust="spacingAndGlyphs">-458</text>
<text x="3744" y="175" font-size="14" fill="#bbb" textLength="22" lengthAdjust="spacingAndGlyphs">781</text>
<text x="3744" y="192" font-size="14" fill="#32cd32" textLength="23" lengthAdjust="spacingAndGlyphs">710</text>
<text x="3732" y="223" font-size="25" fill="#ff0000" textLength="34" lengthAdjust="spacingAndGlyphs">7%</text>
<text x="3692" y="251" font-size="16" fill="#707070" textLength="76" lengthAdjust="spacingAndGlyphs">OpenPips</text>
<text x="3694" y="302" font-size="16" fill="#707070" textLength="72" lengthAdjust="spacingAndGlyphs">OpenPos</text>
<text x="3695" y="347" font-size="16" fill="#707070" textLength="70" lengthAdjust="spacingAndGlyphs">Daily P/L</text>
</g>
<g font-size="14" fill="#fff">
<text x="3696" y="158" textLength="32" lengthAdjust="spacingAndGlyphs">P2Op</text>
<text x="3701" y="175" fill="#aaa" textLength="27" lengthAdjust="spacingAndGlyphs">HiLo</text>
<text x="3702" y="192" textLength="27" lengthAdjust="spacingAndGlyphs">ADR</text>
</g>
<g fill="#606060">
<text x="3728" y="278" font-size="24" textLength="39" lengthAdjust="spacingAndGlyphs">0.00</text>
<text x="3717" y="325" font-size="19" textLength="51" lengthAdjust="spacingAndGlyphs">0.00%</text>
<text x="3717" y="370" font-size="19" textLength="51" lengthAdjust="spacingAndGlyphs">0.00%</text>
</g>

<!-- buttons -->
<g stroke="#fff" stroke-width="1">
<rect x="3681" y="408.5" width="43" height="24" rx="1.5" fill="#008000"/>
<rect x="3735" y="408.5" width="44" height="24" rx="1.5" fill="#dc143c"/>
<rect x="3692.5" y="442.5" width="78" height="24" rx="1.5" fill="#000"/>
<rect x="3680.5" y="476.5" width="99" height="24" rx="1.5" fill="#dc143c"/>
</g>
<g font-weight="bold" fill="#fff" font-family="'DejaVu Sans',sans-serif">
<text x="3688" y="426" font-size="13" textLength="30" lengthAdjust="spacingAndGlyphs">BUY</text>
<text x="3739" y="426" font-size="13" textLength="36" lengthAdjust="spacingAndGlyphs">SELL</text>
<text x="3701" y="461" font-size="16" textLength="60" lengthAdjust="spacingAndGlyphs">CLOSE</text>
<text x="3682" y="495" font-size="15" textLength="94" lengthAdjust="spacingAndGlyphs">CLOSEALL</text>
</g>
</svg>
<script>
(function(){
var Z=[[4,264],[40,150],[100,300],[204,90],[308,592],[389,235],[468,1094],[628,477],[852,1212],[1021,640],[1116,787],[1277,554],[1389,828],[1485,639],[1701,1012],[1861,744],[1878,853],[2165,237],[2261,498],[2309,290],[2436,778],[2501,518],[2612,1175],[2765,513],[2877,1096],[2916,886],[3173,1493],[3181,1249],[3221,1736],[3237,1640],[3245,1590],[3253,1590],[3262,1600],[3277,1610],[3285,1640],[3293,1665],[3302,1655],[3310,1640],[3320,1635]];
var C=[[25,'g'],[210,'b'],[232,'g'],[353,'v'],[397,'b'],[582,'v'],[680,'g'],[918,'v'],[968,'g'],[1304,'b'],[1398,'g'],[1782,'v'],[1834,'b'],[1878,'g'],[2167,'b'],[2262,'g'],[2312,'b'],[2698,'v'],[2748,'g'],[2796,'b'],[3330,'v']];
var s=48271;function r(){s=s*16807%2147483647;return s/2147483647}
var W={b:'',v:'',g:''},B={b:'',v:'',g:''};
for(var x=8;x<3320;x+=8){
 var k=0;while(k<Z.length-2&&Z[k+1][0]<x)k++;
 var a=Z[k],b=Z[k+1],t=(x-a[0])/(b[0]-a[0]),y=a[1]+(b[1]-a[1])*t,sl=Math.abs((b[1]-a[1])/(b[0]-a[0]));
 var d=Math.min(x-a[0],b[0]-x),tail=x>3225,amp=tail?6:Math.min(48,d*.7);
 var hi=Math.min(a[1],b[1]),lo=Math.max(a[1],b[1]);
 var bow=tail?0:-Math.sin(Math.PI*t)*Math.min(75,.12*(lo-hi));
 if(x<26){y=320;amp=12;sl=.5;bow=0;hi=280;lo=360}
 if(tail){hi=1530;lo=1690}
 var c=y+bow+(r()-.5)*2*amp,h=Math.max(3,sl*14*(.25+r())+r()*r()*55),up=r()*r()*60,dn=r()*r()*60;
 var j=0;while(j<C.length-1&&C[j][0]<x)j++;var o=C[j][1];
 var t0=Math.max(hi,c-h/2),b0=Math.min(lo,c+h/2);
 if(b0<t0+3){t0=Math.min(t0,lo-3);b0=t0+3}
 var wt=Math.max(hi,t0-up),wb=Math.min(lo,b0+dn);
 W[o]+='M'+x+' '+wt.toFixed(0)+'V'+wb.toFixed(0);
 B[o]+='M'+x+' '+t0.toFixed(0)+'V'+b0.toFixed(0);
}
['b','v','g'].forEach(function(o){
 document.getElementById('w'+o).setAttribute('d',W[o]);
 document.getElementById('b'+o).setAttribute('d',B[o]);
});
})();
</script>
</body></html>
